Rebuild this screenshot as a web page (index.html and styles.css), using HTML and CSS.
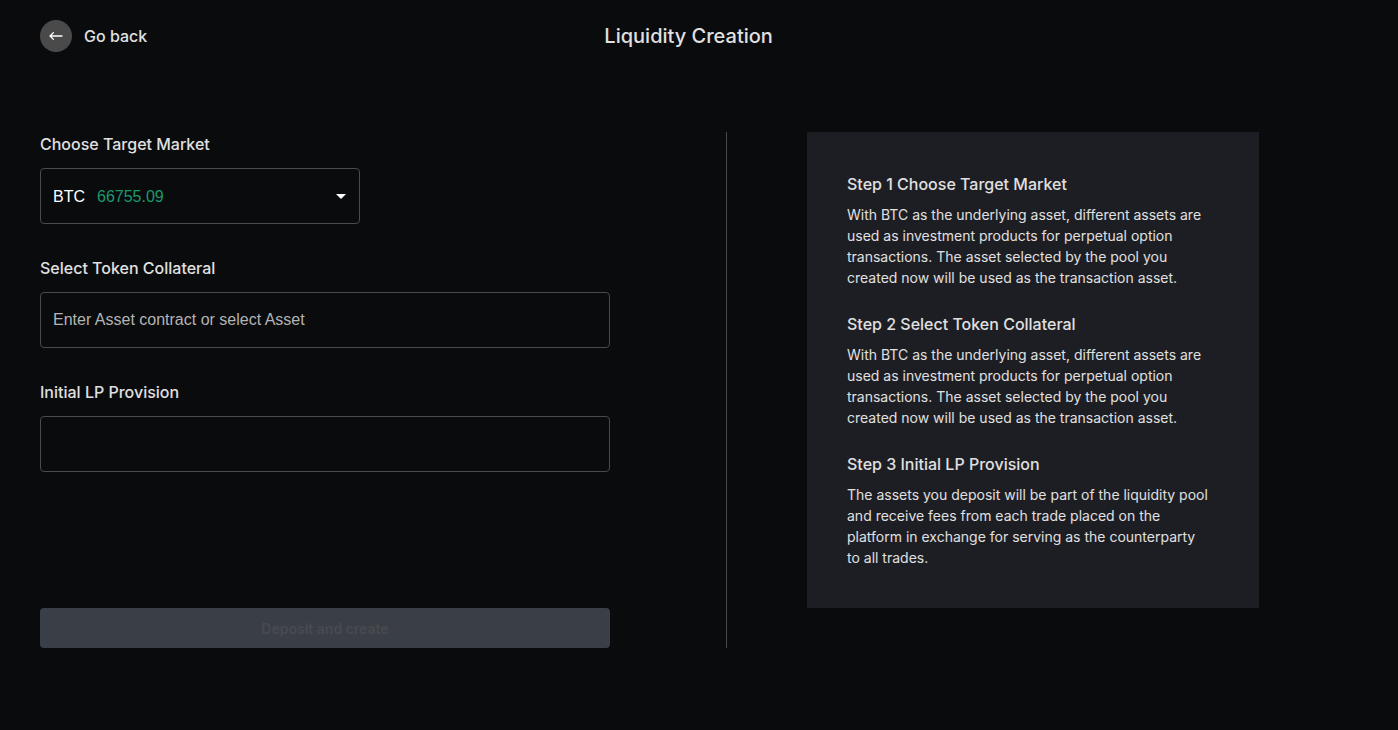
FILE: index.html
```html
<!DOCTYPE html>
<html lang="en">
<head>
  <meta charset="UTF-8" />
  <meta name="viewport" content="width=device-width, initial-scale=1.0"/>
  <title>Liquidity Creation</title>
  <link rel="stylesheet" href="styles.css">
</head>
<body>
  <header class="top-bar">
    <a href="#" class="go-back">
      <span class="back-icon">
        <svg width="16" height="16" viewBox="0 0 16 16" fill="none" stroke="currentColor" stroke-width="1.3" stroke-linecap="round" stroke-linejoin="round" aria-hidden="true">
          <path d="M14 8H2M5.4 4.6L2 8l3.4 3.4"/>
        </svg>
      </span>
      Go back
    </a>
    <h1 class="page-title">Liquidity Creation</h1>
    <div class="top-bar-end"></div>
  </header>

  <main class="content">
    <div class="form-column">
      <form class="pool-form">
        <div class="field">
          <label for="market">Choose Target Market</label>
          <div class="market-select">
            <select id="market">
              <option>BTC</option>
              <option>ETH</option>
            </select>
            <span class="market-price">66755.09</span>
            <svg class="caret" width="24" height="24" viewBox="0 0 24 24" fill="currentColor" aria-hidden="true">
              <path d="M7 10l5 5 5-5z"/>
            </svg>
          </div>
        </div>

        <div class="field">
          <label for="token">Select Token Collateral</label>
          <input type="text" id="token" placeholder="Enter Asset contract or select Asset" />
        </div>

        <div class="field">
          <label for="amount">Initial LP Provision</label>
          <input type="text" id="amount" />
        </div>

        <button type="submit" class="submit-btn" disabled>Deposit and create</button>
      </form>
    </div>

    <aside class="steps">
      <section>
        <h2>Step 1 Choose Target Market</h2>
        <p>With BTC as the underlying asset, different assets are used as investment products for perpetual option transactions. The asset selected by the pool you created now will be used as the transaction asset.</p>
      </section>
      <section>
        <h2>Step 2 Select Token Collateral</h2>
        <p>With BTC as the underlying asset, different assets are used as investment products for perpetual option transactions. The asset selected by the pool you created now will be used as the transaction asset.</p>
      </section>
      <section>
        <h2>Step 3 Initial LP Provision</h2>
        <p>The assets you deposit will be part of the liquidity pool and receive fees from each trade placed on the platform in exchange for serving as the counterparty to all trades.</p>
      </section>
    </aside>
  </main>
</body>
</html>
```

FILE: styles.css
```css
* {
  box-sizing: border-box;
}

body {
  font-family: Inter, sans-serif;
  font-size: 16px;
  line-height: 24px;
  background-color: #0a0b0d;
  color: #e0e0e0;
  padding: 20px 40px;
  margin: 0;
}

h1, h2, p {
  margin: 0;
}

.top-bar {
  display: flex;
  justify-content: space-between;
  align-items: center;
  margin-bottom: 80px;
}

.go-back {
  display: flex;
  align-items: center;
  gap: 12px;
  color: #e0e0e0;
  font-weight: 500;
  text-decoration: none;
}

.back-icon {
  display: flex;
  align-items: center;
  justify-content: center;
  width: 32px;
  height: 32px;
  border-radius: 50%;
  background-color: #4a4a4a;
  color: #fff;
}

.page-title {
  font-size: 20px;
  font-weight: 500;
}

.top-bar-end {
  width: 128px;
}

.content {
  display: flex;
  align-items: flex-start;
  gap: 80px;
}

.form-column {
  flex: 0 1 687px;
  border-right: 1px solid #4a4a4a;
}

.pool-form {
  display: flex;
  flex-direction: column;
  gap: 32px;
  max-width: 570px;
}

.field {
  display: flex;
  flex-direction: column;
  gap: 12px;
}

.field label {
  font-weight: 500;
}

.field input, .market-select {
  height: 56px;
  border: 1px solid #4a4a4a;
  border-radius: 4px;
}

.field input, .field select {
  width: 100%;
  padding: 0 12px;
  background-color: transparent;
  color: #fff;
  font-family: Arial, "Liberation Sans", sans-serif;
  font-size: 16px;
}

.field input::placeholder {
  color: #b4b4b4;
  opacity: 1;
}

/* the price and the caret share the select's grid cell */
.market-select {
  display: grid;
  align-items: center;
  max-width: 320px;
}

.market-select > * {
  grid-area: 1 / 1;
}

.market-select select {
  height: 100%;
  border: none;
  appearance: none;
}

.market-price {
  margin-left: 56px;
  color: #1a9a6c;
  font-family: Arial, "Liberation Sans", sans-serif;
  line-height: 25px;
  pointer-events: none;
}

.caret {
  justify-self: end;
  margin-right: 6px;
  color: #fff;
  pointer-events: none;
}

.submit-btn {
  height: 40px;
  margin-top: 104px;
  border: none;
  border-radius: 4px;
  background-color: #3a3e46;
  color: #484a4f;
  font-family: inherit;
  font-size: 14px;
  font-weight: 600;
}

.steps {
  display: flex;
  flex-direction: column;
  gap: 24px;
  flex: 0 1 452px;
  padding: 40px 48px 40px 40px;
  background-color: #1d1e23;
}

.steps h2 {
  margin-bottom: 8px;
  font-size: 16px;
  font-weight: 500;
}

.steps p {
  font-size: 14px;
  line-height: 21px;
}

@media (max-width: 900px) {
  .content {
    flex-direction: column;
    gap: 40px;
  }

  .form-column {
    width: 100%;
    flex: none;
    border-right: none;
  }

  .steps {
    flex: none;
  }

  .top-bar-end {
    display: none;
  }
}
```
